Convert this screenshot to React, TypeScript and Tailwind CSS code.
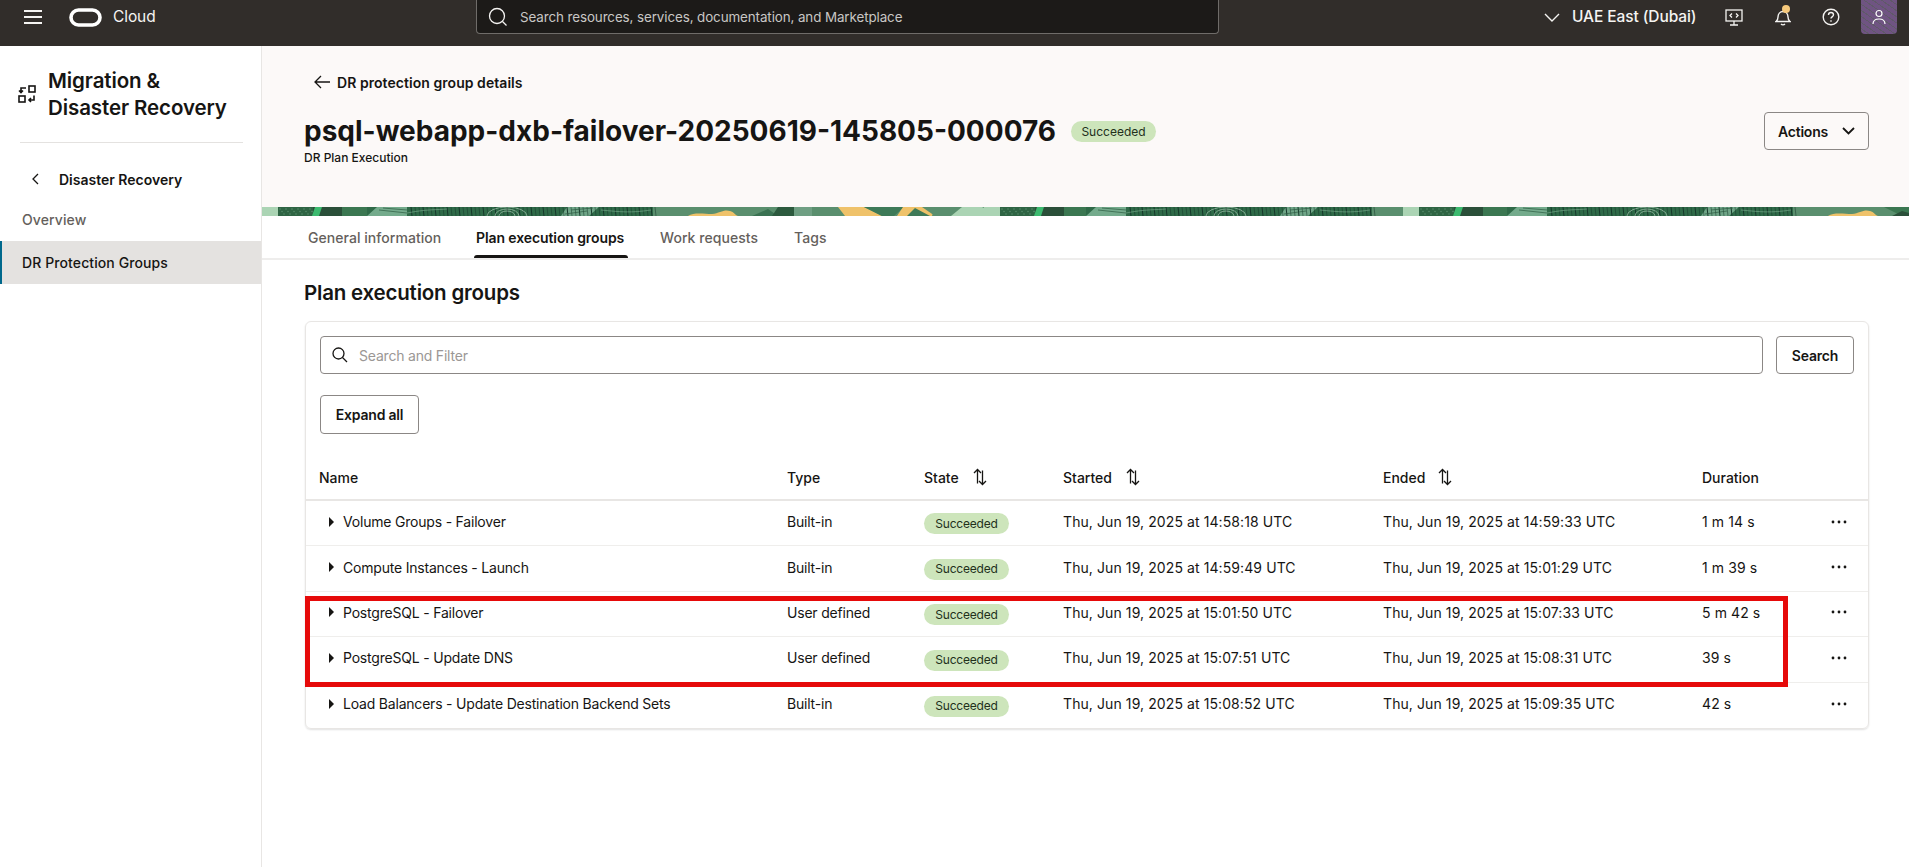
import { ReactNode } from "react";

const rows = [
  { name: "Volume Groups - Failover", type: "Built-in", started: "Thu, Jun 19, 2025 at 14:58:18 UTC", ended: "Thu, Jun 19, 2025 at 14:59:33 UTC", duration: "1 m 14 s" },
  { name: "Compute Instances - Launch", type: "Built-in", started: "Thu, Jun 19, 2025 at 14:59:49 UTC", ended: "Thu, Jun 19, 2025 at 15:01:29 UTC", duration: "1 m 39 s" },
  { name: "PostgreSQL - Failover", type: "User defined", started: "Thu, Jun 19, 2025 at 15:01:50 UTC", ended: "Thu, Jun 19, 2025 at 15:07:33 UTC", duration: "5 m 42 s" },
  { name: "PostgreSQL - Update DNS", type: "User defined", started: "Thu, Jun 19, 2025 at 15:07:51 UTC", ended: "Thu, Jun 19, 2025 at 15:08:31 UTC", duration: "39 s" },
  { name: "Load Balancers - Update Destination Backend Sets", type: "Built-in", started: "Thu, Jun 19, 2025 at 15:08:52 UTC", ended: "Thu, Jun 19, 2025 at 15:09:35 UTC", duration: "42 s" },
];

const cols = "grid grid-cols-[468px_137px_139px_320px_319px_129px_1fr] items-center pl-[13px]";

function Fingerprint({ x }: { x: number }) {
  return (
    <g transform={`translate(${x} 0)`}>
      <rect x="0" width="286" height="9" fill="#2f6a48" />
      <polygon points="10,0 40,0 40,9 0,9" fill="#74ab8c" />
      <polygon points="200,0 232,0 222,9 194,9" fill="#6fa587" />
      {Array.from({ length: 62 }).map((_, i) => (
        <line key={i} x1={44 + i * 4} y1="0" x2={45 + i * 4} y2="9" stroke="#16382a" strokeWidth={i % 3 === 0 ? 1 : 0.5} />
      ))}
      <path d="M128 9a12 7 0 0 1 24 0M132 9a8 5 0 0 1 16 0M120 9a20 9 0 0 1 40 0" fill="none" stroke="#b7d3c0" strokeWidth="0.6" />
      <path d="M12 3l28 3M16 1l24 2M204 3l22-2M198 7l22-3" stroke="#2c5c42" strokeWidth="0.7" />
      <path d="M40 6c20-4 30-3 40-4M234 3c20 2 30 3 50 0" fill="none" stroke="#8dbb9f" strokeWidth="0.5" />
    </g>
  );
}

function Leaf({ x }: { x: number }) {
  return (
    <g transform={`translate(${x} 0)`}>
      <rect x="0" width="16" height="9" fill="#abd4b4" />
      <rect x="16" width="35" height="9" fill="#2f6544" />
      {Array.from({ length: 17 }).map((_, i) => (
        <circle key={i} cx={18 + i * 2} cy={2 + (i % 3) * 2.5} r="0.7" fill="#5d9273" />
      ))}
      <rect x="51" width="29" height="9" fill="#2a4f39" />
      <polygon points="53,0 60,0 57,9 50,9" fill="#3cba6f" />
      <rect x="80" width="25" height="9" fill="#3b7751" />
    </g>
  );
}

function Banner() {
  return (
    <svg viewBox="0 0 1647 9" preserveAspectRatio="none" className="block h-[9px] w-full" aria-hidden="true">
      <rect width="1647" height="9" fill="#5a8f6e" />
      <Leaf x={0} />
      <Fingerprint x={105} />
      <path d="M426 9c6-4 16-2 24-2 8-1 12-5 18-3 4 1 5 4 8 5z" fill="#efc26a" />
      <polygon points="490,9 506,2 516,9" fill="#3a7252" />
      <polygon points="516,0 532,0 532,9 510,9" fill="#2c5a3e" />
      <rect x="532" width="18" height="9" fill="#6f9f83" />
      <polygon points="576,0 602,0 620,9 583,9" fill="#efc26a" />
      <path d="M602 0h40l-10 9h-12zM612 0l22 9M624 0l14 9" fill="#3d7a58" />
      <polygon points="641,0 646,0 660,0 673,9 635,9" fill="#efc26a" />
      <polygon points="645,9 653,1 668,9" fill="#3f7a58" />
      <polygon points="673,0 697,0 697,9 670,9" fill="#5a8f6e" />
      <polygon points="700,0 720,0 738,9 689,9" fill="#abd4b4" />
      <Leaf x={722} />
      <Fingerprint x={824} />
      <Leaf x={1141} />
      <Fingerprint x={1245} />
      <path d="M1566 9c6-4 16-2 24-2 8-1 12-5 18-3 4 1 5 4 8 5z" fill="#efc26a" />
      <polygon points="1622,0 1647,0 1647,9 1640,9" fill="#3b7751" />
      <polygon points="1630,9 1640,4 1647,6 1647,9" fill="#2a4f39" />
    </svg>
  );
}

function SortIcon() {
  return (
    <svg width="14" height="18" viewBox="0 0 14 18" fill="none" stroke="#161513" strokeWidth="1.3" aria-hidden="true">
      <path d="M4.5 15.5V1.5M1 5l3.5-3.5L8 5M9.5 2.5v14M6 13l3.5 3.5L13 13" />
    </svg>
  );
}

function Badge({ children }: { children: ReactNode }) {
  return (
    <span className="inline-flex h-[21px] w-[85px] items-center justify-center rounded-full bg-[#cde5bb] text-[12px] leading-none text-[#22301c]">
      {children}
    </span>
  );
}

function OutlineButton({ children, className }: { children: ReactNode; className: string }) {
  return (
    <button className={`flex items-center justify-center rounded-[4px] border border-[#8b8785] text-[14px] font-semibold tracking-[-0.2px] text-[#161513] ${className}`}>
      {children}
    </button>
  );
}

function TopBar() {
  return (
    <header className="flex h-[46px] shrink-0 items-start bg-[#312d2a] text-white">
      <div className="flex h-[34px] w-[476px] shrink-0 items-center">
        <svg width="18" height="14" viewBox="0 0 18 14" stroke="#f5f4f2" strokeWidth="2" className="ml-[24px]" aria-hidden="true">
          <path d="M0 1h18M0 7h18M0 13h18" />
        </svg>
        <svg width="33" height="19" viewBox="0 0 33 19" fill="none" className="ml-[27px]" aria-hidden="true">
          <rect x="2" y="2" width="29" height="15" rx="7.5" stroke="#ffffff" strokeWidth="3.6" />
        </svg>
        <span className="ml-[11px] text-[15.5px] tracking-[-0.1px] text-[#f5f4f2]">Cloud</span>
      </div>
      <div className="flex h-[34px] w-[743px] items-center rounded-b-[4px] border-x border-b border-[#6f6c69] bg-[#1c1a18]">
        <svg width="20" height="20" viewBox="0 0 20 20" fill="none" stroke="#f5f4f2" strokeWidth="1.3" className="ml-[11px]" aria-hidden="true">
          <circle cx="9" cy="9" r="7.5" />
          <path d="M14.5 14.5l4 4" />
        </svg>
        <span className="mt-[1px] ml-[12px] text-[13.4px] tracking-[-0.1px] text-[#c9c7c5]">Search resources, services, documentation, and Marketplace</span>
      </div>
      <div className="ml-[325px] flex h-[34px] items-center">
        <svg width="16" height="9" viewBox="0 0 16 9" fill="none" stroke="#f5f4f2" strokeWidth="1.4" aria-hidden="true">
          <path d="M1 1l7 7 7-7" />
        </svg>
        <span className="ml-[12px] text-[15.5px] font-medium tracking-[-0.1px] text-[#f5f4f2]">UAE East (Dubai)</span>
        <svg width="18" height="17" viewBox="0 0 18 17" fill="none" stroke="#f5f4f2" strokeWidth="1.3" className="ml-[29px]" aria-hidden="true">
          <rect x="1" y="1" width="16" height="11" />
          <path d="M9 12v3.5M5 16h8M7 4.5L5 6.5l2 2M11 4.5l2 2-2 2" />
        </svg>
        <div className="relative ml-[32px] h-[18px] w-[16px]">
          <svg width="16" height="18" viewBox="0 0 16 18" fill="none" stroke="#f5f4f2" strokeWidth="1.4" aria-hidden="true">
            <path d="M1 13.5c1.5-1 2-2 2-4.5 0-3 2-5.5 5-5.5s5 2.500 5 5.500c0 2.500.5 3.500 2 4.500zM6 16c1 1 3 1 4 0" />
          </svg>
          <span className="absolute top-[-3px] left-[7px] h-[8px] w-[8px] rounded-full bg-[#f6c97c]" />
        </div>
        <svg width="18" height="18" viewBox="0 0 18 18" fill="none" stroke="#f5f4f2" strokeWidth="1.4" className="ml-[31px]" aria-hidden="true">
          <circle cx="9" cy="9" r="7.8" />
          <path d="M6.500 7c0-1.500 1-2.500 2.500-2.500s2.500 1 2.500 2.300c0 2-2.500 2-2.500 3.700M9 12.300v1.400" />
        </svg>
        <div className="ml-[21px] flex h-[34px] w-[36px] items-center justify-center rounded-b-[4px] bg-[repeating-linear-gradient(35deg,#6f5482_0px,#6f5482_4px,#5f5a68_4px,#5f5a68_5px)]">
          <svg width="14" height="16" viewBox="0 0 14 16" fill="none" stroke="#ffffff" strokeWidth="1.2" aria-hidden="true">
            <circle cx="7" cy="4.500" r="3" />
            <path d="M1 15c0-3.500 2.500-5 6-5s6 1.500 6 5" />
          </svg>
        </div>
      </div>
    </header>
  );
}

function Sidebar() {
  return (
    <aside className="w-[262px] shrink-0 border-r border-[#e8e6e4] bg-white">
      <div className="flex items-center pt-[21px] pl-[18px]">
        <svg width="18" height="18" viewBox="0 0 18 18" fill="none" stroke="#161513" strokeWidth="1.600" aria-hidden="true">
          <rect x="11" y="1" width="6" height="6" />
          <rect x="1" y="11" width="6" height="6" />
          <path d="M8 3H3v4.500M1 5.500l2 2 2-2M16 10.500V15h-5M13 13l-2 2 2 2" />
        </svg>
        <h2 className="ml-[12px] text-[20.5px] leading-[27px] font-semibold tracking-[-0.1px] text-[#161513]">
          Migration &amp;
          <br />
          Disaster Recovery
        </h2>
      </div>
      <div className="mt-[21px] mr-[18px] ml-[20px] border-t border-[#e4e2e0]" />
      <div className="mt-[18px] flex h-[36px] items-center pl-[32px] text-[14px] font-semibold tracking-[0px] text-[#161513]">
        <svg width="7" height="12" viewBox="0 0 7 12" fill="none" stroke="#161513" strokeWidth="1.300" aria-hidden="true">
          <path d="M6 1L1 6l5 5" />
        </svg>
        <span className="ml-[20px]">Disaster Recovery</span>
      </div>
      <div className="flex h-[44px] items-center pt-[1px] pl-[22px] text-[14px] font-medium tracking-[0.1px] text-[#655f5c]">Overview</div>
      <div className="flex h-[43px] items-center border-l-2 border-[#00688c] bg-[#e4e2e0] pl-[20px] text-[14px] font-medium tracking-[0.1px] text-[#161513]">
        DR Protection Groups
      </div>
    </aside>
  );
}

function PageHeader() {
  return (
    <>
      <section className="h-[161px] bg-[#fcf9f8] pt-[26px] pl-[42px]">
        <div className="ml-[10px] flex h-[20px] items-center text-[14px] font-semibold tracking-[0.05px] text-[#161513]">
          <svg width="16" height="14" viewBox="0 0 16 14" fill="none" stroke="#161513" strokeWidth="1.300" aria-hidden="true">
            <path d="M16 7H1M7 1L1 7l6 6" />
          </svg>
          <span className="ml-[7px]">DR protection group details</span>
        </div>
        <div className="mt-[20px] flex h-[38px] items-center justify-between pr-[40px]">
          <div className="flex items-center">
            <h1 className="text-[28px] leading-[38px] font-bold tracking-[0px] text-[#161513]">psql-webapp-dxb-failover-20250619-145805-000076</h1>
            <span className="mb-[2px] ml-[15px]">
              <Badge>Succeeded</Badge>
            </span>
          </div>
          <OutlineButton className="h-[38px] w-[105px] gap-[14px]">
            Actions
            <svg width="13" height="8" viewBox="0 0 13 8" fill="none" stroke="#161513" strokeWidth="1.800" aria-hidden="true">
              <path d="M1 1l5.500 5.500L12 1" />
            </svg>
          </OutlineButton>
        </div>
        <p className="text-[12px] leading-[16px] font-medium tracking-[0px] text-[#161513]">DR Plan Execution</p>
      </section>
      <Banner />
    </>
  );
}

function Tabs() {
  return (
    <nav className="flex h-[44px] items-start border-b-2 border-[#eeedec] pl-[46px] text-[14px] font-medium tracking-[0.05px] text-[#655f5c]">
      <div className="flex h-[42px] w-[168px] items-center">General information</div>
      <div className="relative flex h-[42px] w-[184px] items-center font-semibold tracking-[-0.1px] text-[#161513]">
        Plan execution groups
        <span className="absolute right-[32px] bottom-0 left-[-2px] h-[3px] rounded-t-[3px] bg-[#161513]" />
      </div>
      <div className="flex h-[42px] w-[134px] items-center">Work requests</div>
      <div className="flex h-[42px] items-center">Tags</div>
    </nav>
  );
}

function Table() {
  return (
    <div className="relative">
      <div className={`${cols} h-[67px] border-b-2 border-[#e8e6e4] pt-[21px] text-[14px] font-medium tracking-[0px] text-[#161513]`}>
        <span>Name</span>
        <span>Type</span>
        <span className="flex items-center gap-[14px]">State <SortIcon /></span>
        <span className="flex items-center gap-[14px]">Started <SortIcon /></span>
        <span className="flex items-center gap-[13px]">Ended <SortIcon /></span>
        <span>Duration</span>
      </div>
      {rows.map((row, i) => (
        <div key={row.name} className={`${cols} h-[45.400px] text-[14px] tracking-[-0.2px] text-[#161513] ${i < rows.length - 1 ? "border-b border-[#efeeec]" : ""}`}>
          <span className="mb-[3px] flex items-center pl-[10px]">
            <svg width="5" height="10" viewBox="0 0 5 10" fill="#161513" aria-hidden="true">
              <path d="M0 0l5 5-5 5z" />
            </svg>
            <span className="ml-[9px]">{row.name}</span>
          </span>
          <span className="mb-[3px]">{row.type}</span>
          <span>
            <Badge>Succeeded</Badge>
          </span>
          <span className="mb-[3px] tracking-[0.09px]">{row.started}</span>
          <span className="mb-[3px] tracking-[0.09px]">{row.ended}</span>
          <span className="mb-[3px] tracking-[0.1px]">{row.duration}</span>
          <svg width="16" height="4" viewBox="0 0 16 4" fill="#161513" className="mb-[3px]" aria-hidden="true">
            <circle cx="2" cy="2" r="1.400" />
            <circle cx="8" cy="2" r="1.400" />
            <circle cx="14" cy="2" r="1.400" />
          </svg>
        </div>
      ))}
      <div className="pointer-events-none absolute top-[162px] left-[-1px] h-[91px] w-[1483px] border-[5px] border-[#e60a0a]" />
    </div>
  );
}

export default function App() {
  return (
    <div className="flex h-screen flex-col overflow-hidden bg-white font-['Inter',sans-serif]">
      <TopBar />
      <div className="flex flex-1">
        <Sidebar />
        <main className="min-w-0 flex-1">
          <PageHeader />
          <Tabs />
          <h2 className="mt-[19px] ml-[42px] text-[20.5px] leading-[28px] font-semibold tracking-[-0.2px] text-[#161513]">Plan execution groups</h2>
          <div className="mt-[14px] mr-[40px] ml-[43px] rounded-[6px] border border-[#e8e6e4] shadow-[0_1px_2px_rgba(0,0,0,0.12)]">
            <div className="flex gap-[13px] px-[14px] pt-[14px]">
              <div className="flex h-[38px] flex-1 items-center rounded-[4px] border border-[#8b8785] pl-[11px]">
                <svg width="16" height="16" viewBox="0 0 16 16" fill="none" stroke="#161513" strokeWidth="1.300" aria-hidden="true">
                  <circle cx="6.500" cy="6.500" r="5.500" />
                  <path d="M10.500 10.500l4.500 4.500" />
                </svg>
                <span className="ml-[11px] text-[14px] tracking-[-0.2px] text-[#9b9795]">Search and Filter</span>
              </div>
              <OutlineButton className="h-[38px] w-[78px]">Search</OutlineButton>
            </div>
            <div className="px-[14px] pt-[21px]">
              <OutlineButton className="h-[39px] w-[99px]">Expand all</OutlineButton>
            </div>
            <Table />
          </div>
        </main>
      </div>
    </div>
  );
}
